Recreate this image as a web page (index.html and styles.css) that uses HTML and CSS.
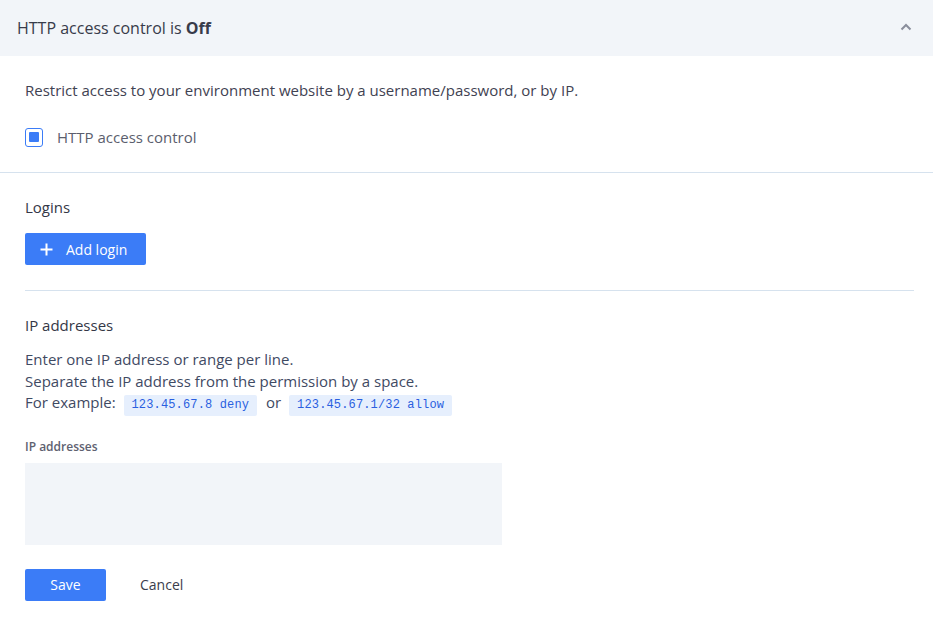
FILE: index.html
```html
<!DOCTYPE html>
<html>
<head>
<meta charset="utf-8">
<link rel="stylesheet" href="styles.css">
</head>
<body>
<div class="panel">
  <div class="header">
    <span class="title">HTTP access control is <b>Off</b></span>
    <svg class="chevron" width="12" height="8" viewBox="0 0 12 8"><path d="M1.5 6.5 L6 2 L10.5 6.5" fill="none" stroke="#8a8e9c" stroke-width="2"/></svg>
  </div>
  <div class="intro">
    <p class="lead">Restrict access to your environment website by a username/password, or by IP.</p>
    <label class="check">
      <span class="box"><span class="fill"></span></span>
      <span class="check-label">HTTP access control</span>
    </label>
  </div>
  <div class="section">
    <h3 class="heading">Logins</h3>
    <button class="btn btn-add">
      <svg width="13" height="13" viewBox="0 0 13 13"><path d="M6.5 0.5 V12.5 M0.5 6.5 H12.5" stroke="#fff" stroke-width="2"/></svg>
      <span>Add login</span>
    </button>
  </div>
  <div class="section ip">
    <h3 class="heading">IP addresses</h3>
    <p class="help">Enter one IP address or range per line.<br>Separate the IP address from the permission by a space.<br>For example: <code>123.45.67.8 deny</code> or <code>123.45.67.1/32 allow</code></p>
    <div class="field-label">IP addresses</div>
    <div class="textarea"></div>
    <div class="actions">
      <button class="btn btn-save">Save</button>
      <button class="btn-link">Cancel</button>
    </div>
  </div>
</div>
</body>
</html>
```

FILE: styles.css
```css
* { box-sizing: border-box; }
body {
  margin: 0;
  font-family: "Open Sans", "Noto Sans", sans-serif;
  color: #3a3d4c;
  background: #fff;
}
.header {
  height: 56px;
  background: #f2f5f9;
  display: flex;
  align-items: center;
  justify-content: space-between;
  padding: 0 21px 0 17px;
}
.title {
  font-size: 16px;
  color: #383b4a;
}
.title b { font-weight: 700; }
.chevron { margin-top: -3px; }
.intro {
  padding: 22px 25px 25px;
  border-bottom: 1px solid #d6e2ee;
}
.lead {
  margin: 0 0 25px;
  font-size: 15px;
  line-height: 24px;
  color: #3f4252;
}
.check {
  display: flex;
  align-items: center;
  gap: 14px;
}
.box {
  width: 18px;
  height: 19px;
  border: 1.5px solid #3b7cf7;
  border-radius: 3px;
  display: flex;
  align-items: center;
  justify-content: center;
}
.fill {
  width: 10px;
  height: 10px;
  background: #3b7cf7;
  border-radius: 1px;
}
.check-label {
  font-size: 15px;
  color: #5b5e6d;
  line-height: 20px;
}
.section {
  margin: 0 19px 0 25px;
  padding: 23px 0 25px;
  border-bottom: 1px solid #d6e2ee;
}
.section.ip { border-bottom: none; padding-top: 23px; }
.heading {
  margin: 0 0 15px;
  font-size: 15px;
  font-weight: 400;
  line-height: 22px;
  color: #343746;
}
.btn {
  border: none;
  border-radius: 2px;
  background: #3b7cf7;
  color: #fff;
  font-family: "Open Sans", "Noto Sans", sans-serif;
  font-size: 14px;
  height: 32px;
  display: flex;
  align-items: center;
  cursor: pointer;
}
.btn-add {
  width: 121px;
  padding: 0 0 0 15px;
  gap: 13px;
}
.ip .heading { margin-bottom: 13px; }
.help {
  margin: 0;
  font-size: 15px;
  line-height: 21.5px;
  color: #3f4a63;
}
code {
  font-family: "Liberation Mono", "DejaVu Sans Mono", monospace;
  font-size: 12px;
  color: #2a5fe0;
  background: #e6effd;
  border-radius: 2px;
  padding: 3px 8px 4px;
  margin: 0 5px 0 4px;
  letter-spacing: 0.15px;
}
.field-label {
  margin-top: 22px;
  font-size: 12px;
  font-weight: 600;
  color: #5e6170;
  line-height: 16px;
}
.textarea {
  margin-top: 8px;
  width: 477px;
  height: 82px;
  background: #f2f5f9;
}
.actions {
  display: flex;
  align-items: center;
  gap: 34px;
  margin-top: 24px;
}
.btn-save {
  width: 81px;
  justify-content: center;
}
.btn-link {
  border: none;
  background: none;
  padding: 0;
  font-family: "Open Sans", "Noto Sans", sans-serif;
  font-size: 14px;
  color: #3a3d4c;
  cursor: pointer;
}
```
